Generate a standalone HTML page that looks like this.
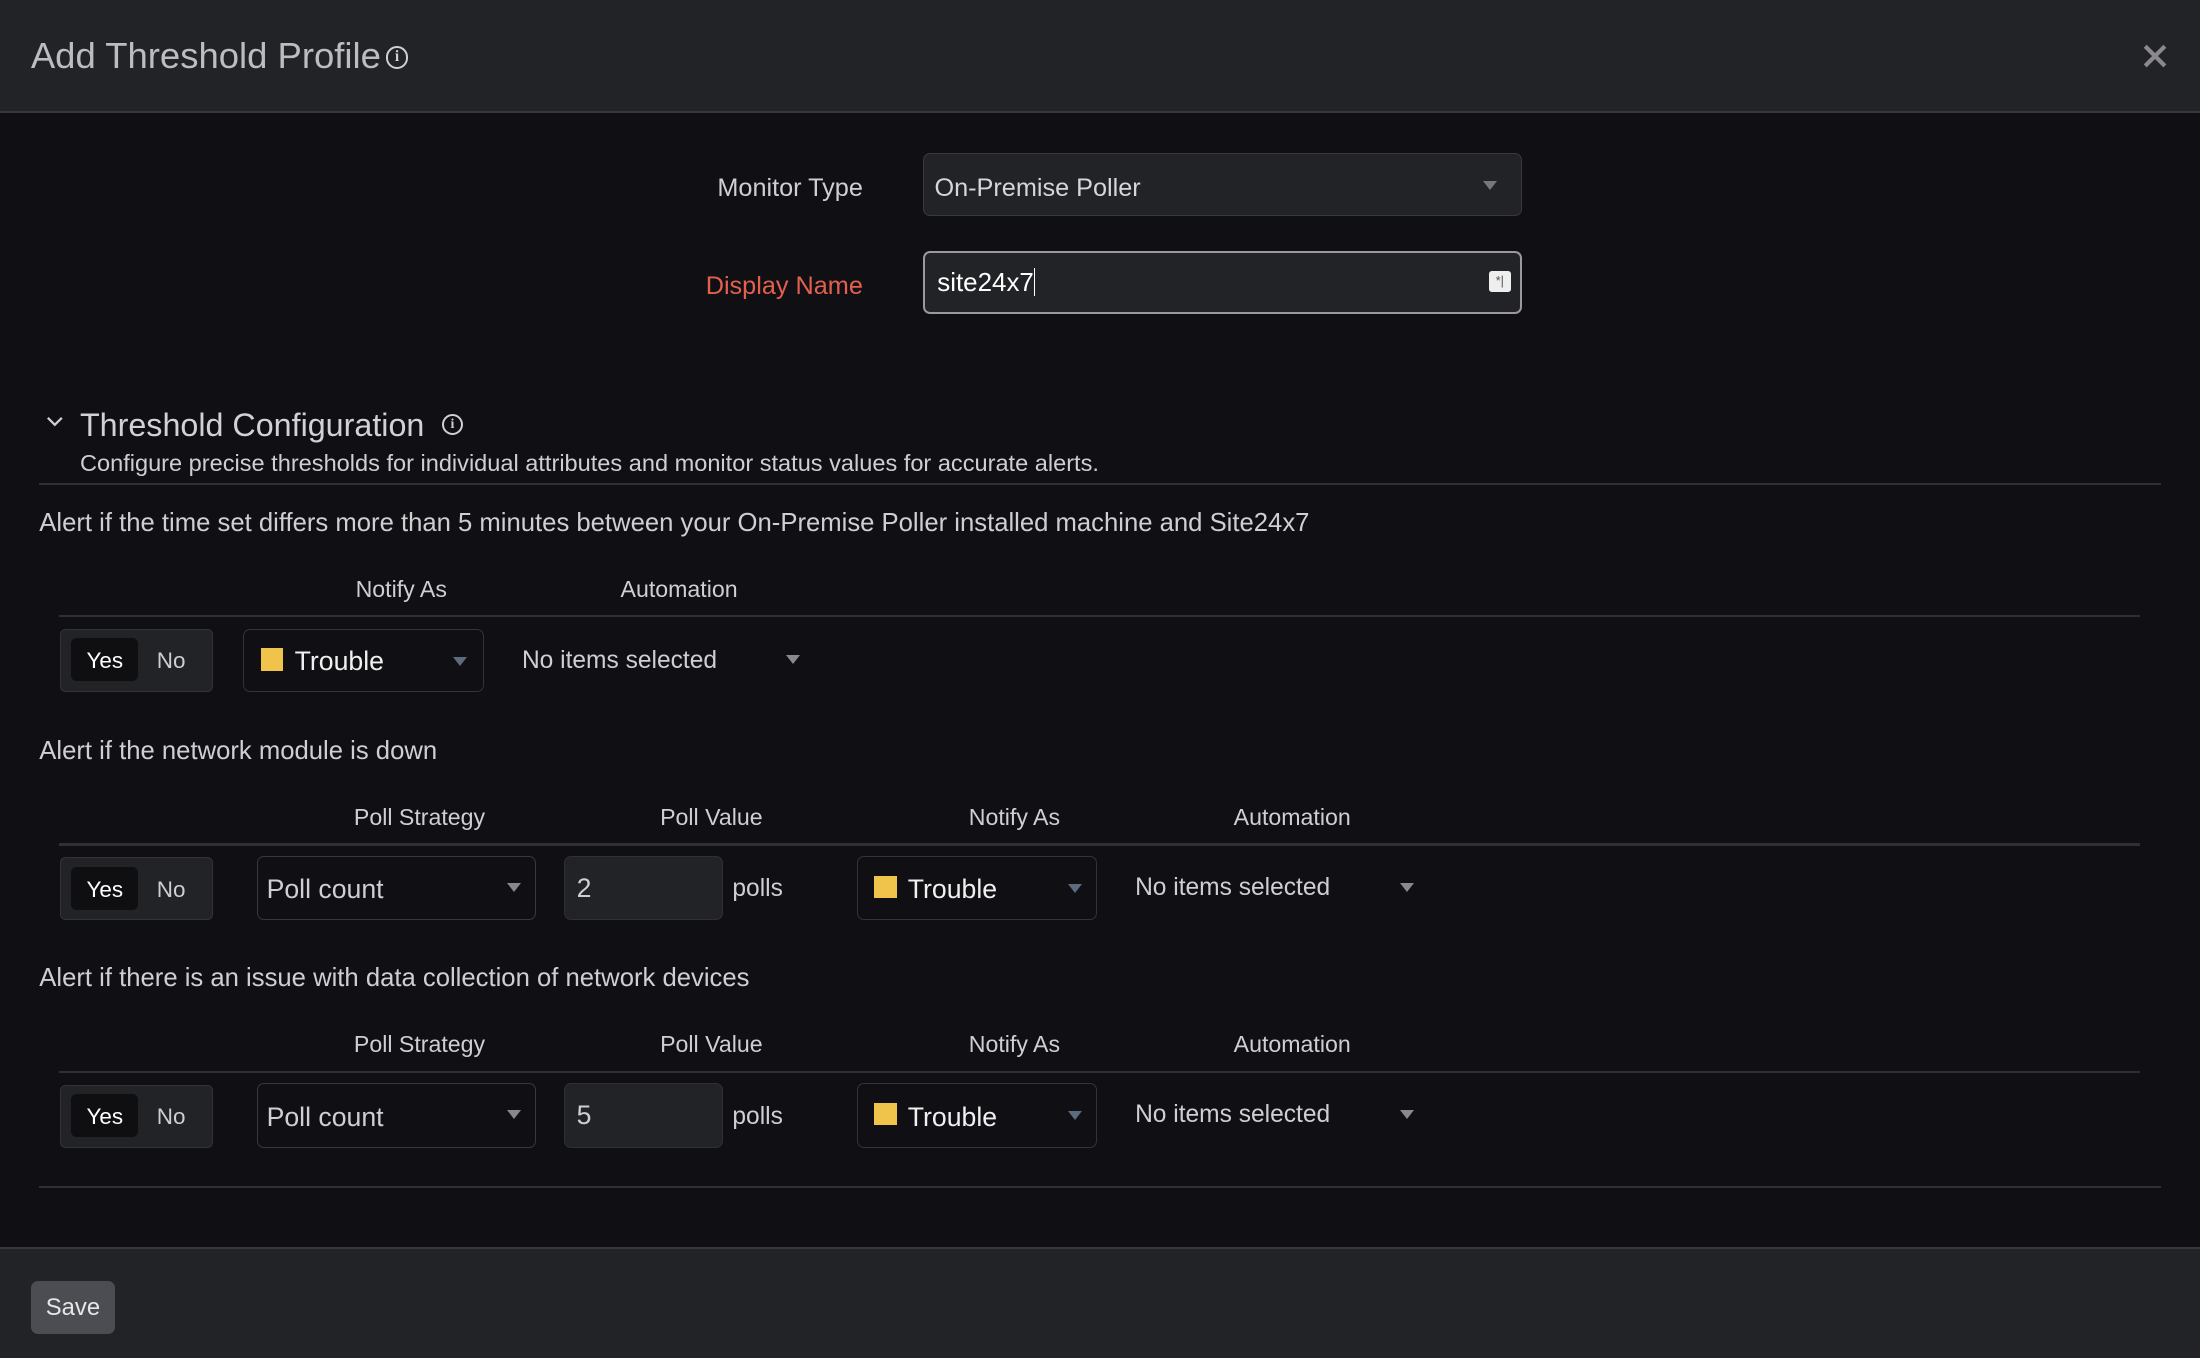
<!DOCTYPE html>
<html><head><meta charset="utf-8"><style>
html,body{margin:0;padding:0;background:#0f0f12;overflow:hidden}
#w{zoom:1.40306;position:relative;width:1568px;height:968px;background:#101014;font-family:"Liberation Sans",sans-serif;color:#cfcfd2}
.a{position:absolute;white-space:nowrap}
.t{position:absolute;white-space:nowrap;height:30px;line-height:30px}
.box{position:absolute;box-sizing:border-box;border-radius:5px}
.line{position:absolute;height:2px;background:#2f3034}
.tri{position:absolute;width:0;height:0;border-left:5px solid transparent;border-right:5px solid transparent;border-top:7px solid #8a8a8e}
.trib{border-top-color:#5d6a80}
.tog{position:absolute;width:109px;height:45px;box-sizing:border-box;background:#222327;border:1px solid #333438;border-radius:4px}
.tog .y{position:absolute;left:7px;top:6px;width:48px;height:31px;background:#0f0f12;border-radius:4px;color:#fff;font-size:16px;line-height:33px;text-align:center}
.tog .n{position:absolute;left:68px;top:6px;font-size:16px;line-height:33px;color:#cfcfd2}
.sq{position:absolute;width:16px;height:16px;background:#f0c44a}
.info{position:absolute;border:1.6px solid #d0d0d0;border-radius:50%;box-sizing:border-box;text-align:center;font-weight:bold;color:#d0d0d0;font-family:"Liberation Serif",serif}
</style></head><body><div id="w">
<!-- header -->
<div class="a" style="left:0;top:0;width:1568px;height:79px;background:#222327;border-bottom:2px solid #36373b"></div>
<div class="t" style="left:22px;top:25px;font-size:26px;letter-spacing:0px;color:#bdbdc0">Add Threshold Profile</div>
<div class="info" style="left:275px;top:33px;width:16px;height:16px;font-size:11px;line-height:13px">i</div>
<svg class="a" style="left:1526px;top:30px" width="20" height="20" viewBox="0 0 20 20"><path d="M3 3L17 17M17 3L3 17" stroke="#8a8a8e" stroke-width="3"/></svg>

<!-- monitor type -->
<div class="t" style="left:400px;width:215px;text-align:right;top:119px;font-size:18px">Monitor Type</div>
<div class="box" style="left:658px;top:109px;width:427px;height:45px;background:#222327;border:1px solid #38393d"></div>
<div class="t" style="left:666px;top:119px;font-size:18px;color:#d6d6d8">On-Premise Poller</div>
<div class="tri" style="left:1057px;top:129px;border-top-color:#777"></div>
<div class="t" style="left:400px;width:215px;text-align:right;top:189px;font-size:18px;color:#e4604e">Display Name</div>
<div class="box" style="left:658px;top:179px;width:427px;height:45px;background:#222327;border:1.5px solid #9a9a9e"></div>
<div class="t" style="left:668px;top:187px;font-size:18.5px;color:#fff">site24x7<span style="display:inline-block;width:1px;height:20px;background:#fff;vertical-align:-3px"></span></div>
<div class="a" style="left:1061px;top:193px;width:16px;height:15px;background:#eee;border-radius:2px;font-size:9px;color:#555;text-align:center;line-height:15px">*|</div>

<!-- threshold config -->
<svg class="a" style="left:32px;top:296px" width="14" height="10" viewBox="0 0 14 10"><path d="M2 2L7 7L12 2" stroke="#cfcfd2" stroke-width="1.6" fill="none"/></svg>
<div class="t" style="left:57px;top:288px;font-size:23px;color:#d2d2d4">Threshold Configuration</div>
<div class="info" style="left:315px;top:295px;width:15px;height:15px;font-size:10px;line-height:12px">i</div>
<div class="t" style="left:57px;top:315px;font-size:16.8px">Configure precise thresholds for individual attributes and monitor status values for accurate alerts.</div>
<div class="line" style="left:28px;top:344px;width:1512px"></div>

<!-- section 1 -->
<div class="t" style="left:28px;top:358px;font-size:18.3px">Alert if the time set differs more than 5 minutes between your On-Premise Poller installed machine and Site24x7</div>
<div class="t" style="left:236px;width:100px;text-align:center;top:405px;font-size:16.5px">Notify As</div>
<div class="t" style="left:424px;width:120px;text-align:center;top:405px;font-size:16.5px">Automation</div>
<div class="line" style="left:42px;top:438px;width:1483px"></div>
<div class="tog" style="left:43px;top:448px"><div class="y">Yes</div><div class="n">No</div></div>
<div class="box" style="left:173px;top:448px;width:172px;height:45px;border:1px solid #333438"></div>
<div class="sq" style="left:186px;top:462px"></div>
<div class="t" style="left:210px;top:456px;font-size:19px;color:#f0f0f0">Trouble</div>
<div class="tri trib" style="left:323px;top:468px"></div>
<div class="t" style="left:372px;top:456px;font-size:17.5px">No items selected</div>
<div class="tri" style="left:560px;top:467px"></div>

<!-- section 2 -->
<div class="t" style="left:28px;top:520px;font-size:18.3px">Alert if the network module is down</div>
<div class="t" style="left:239px;width:120px;text-align:center;top:567px;font-size:16.5px">Poll Strategy</div>
<div class="t" style="left:457px;width:100px;text-align:center;top:567px;font-size:16.5px">Poll Value</div>
<div class="t" style="left:673px;width:100px;text-align:center;top:567px;font-size:16.5px">Notify As</div>
<div class="t" style="left:861px;width:120px;text-align:center;top:567px;font-size:16.5px">Automation</div>
<div class="line" style="left:42px;top:601px;width:1483px"></div>
<div class="tog" style="left:43px;top:611px"><div class="y">Yes</div><div class="n">No</div></div>
<div class="box" style="left:183px;top:610px;width:199px;height:46px;border:1px solid #38393d"></div>
<div class="t" style="left:190px;top:619px;font-size:19px">Poll count</div>
<div class="tri" style="left:361px;top:629px;border-top-color:#888"></div>
<div class="box" style="left:402px;top:610px;width:113px;height:46px;background:#222327;border:1px solid #2f3034"></div>
<div class="t" style="left:411px;top:618px;font-size:19px">2</div>
<div class="t" style="left:522px;top:619px;font-size:17.5px">polls</div>
<div class="box" style="left:611px;top:610px;width:171px;height:46px;border:1px solid #333438"></div>
<div class="sq" style="left:623px;top:624px"></div>
<div class="t" style="left:647px;top:619px;font-size:19px;color:#f0f0f0">Trouble</div>
<div class="tri trib" style="left:761px;top:630px"></div>
<div class="t" style="left:809px;top:618px;font-size:17.5px">No items selected</div>
<div class="tri" style="left:998px;top:629px"></div>

<!-- section 3 -->
<div class="t" style="left:28px;top:682px;font-size:18.3px">Alert if there is an issue with data collection of network devices</div>
<div class="t" style="left:239px;width:120px;text-align:center;top:729px;font-size:16.5px">Poll Strategy</div>
<div class="t" style="left:457px;width:100px;text-align:center;top:729px;font-size:16.5px">Poll Value</div>
<div class="t" style="left:673px;width:100px;text-align:center;top:729px;font-size:16.5px">Notify As</div>
<div class="t" style="left:861px;width:120px;text-align:center;top:729px;font-size:16.5px">Automation</div>
<div class="line" style="left:42px;top:763px;width:1483px"></div>
<div class="tog" style="left:43px;top:773px"><div class="y">Yes</div><div class="n">No</div></div>
<div class="box" style="left:183px;top:772px;width:199px;height:46px;border:1px solid #38393d"></div>
<div class="t" style="left:190px;top:781px;font-size:19px">Poll count</div>
<div class="tri" style="left:361px;top:791px;border-top-color:#888"></div>
<div class="box" style="left:402px;top:772px;width:113px;height:46px;background:#222327;border:1px solid #2f3034"></div>
<div class="t" style="left:411px;top:780px;font-size:19px">5</div>
<div class="t" style="left:522px;top:781px;font-size:17.5px">polls</div>
<div class="box" style="left:611px;top:772px;width:171px;height:46px;border:1px solid #333438"></div>
<div class="sq" style="left:623px;top:786px"></div>
<div class="t" style="left:647px;top:781px;font-size:19px;color:#f0f0f0">Trouble</div>
<div class="tri trib" style="left:761px;top:792px"></div>
<div class="t" style="left:809px;top:780px;font-size:17.5px">No items selected</div>
<div class="tri" style="left:998px;top:791px"></div>

<div class="line" style="left:28px;top:845px;width:1512px"></div>

<!-- footer -->
<div class="a" style="left:0;top:889px;width:1568px;height:79px;background:#222327;border-top:2px solid #36373b"></div>
<div class="box" style="left:22px;top:913px;width:60px;height:38px;background:#4c4d53;border-radius:5px;color:#e6e6e8;font-size:17px;line-height:38px;text-align:center">Save</div>
</div></body></html>
